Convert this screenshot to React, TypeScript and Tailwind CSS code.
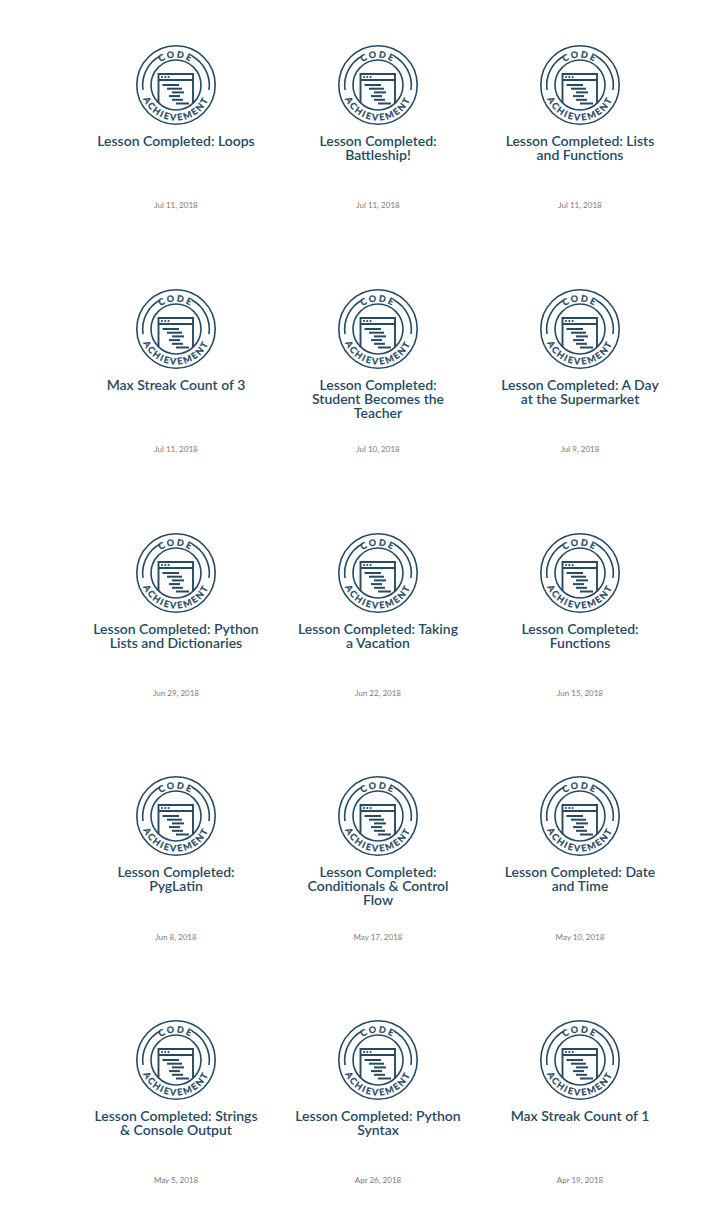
const items = [
  { title: "Lesson Completed: Loops", date: "Jul 11, 2018" },
  { title: "Lesson Completed: Battleship!", date: "Jul 11, 2018" },
  { title: "Lesson Completed: Lists and Functions", date: "Jul 11, 2018" },
  { title: "Max Streak Count of 3", date: "Jul 11, 2018" },
  { title: "Lesson Completed: Student Becomes the Teacher", date: "Jul 10, 2018" },
  { title: "Lesson Completed: A Day at the Supermarket", date: "Jul 9, 2018" },
  { title: "Lesson Completed: Python Lists and Dictionaries", date: "Jun 29, 2018" },
  { title: "Lesson Completed: Taking a Vacation", date: "Jun 22, 2018" },
  { title: "Lesson Completed: Functions", date: "Jun 15, 2018" },
  { title: "Lesson Completed: PygLatin", date: "Jun 8, 2018" },
  { title: "Lesson Completed: Conditionals & Control Flow", date: "May 17, 2018" },
  { title: "Lesson Completed: Date and Time", date: "May 10, 2018" },
  { title: "Lesson Completed: Strings & Console Output", date: "May 5, 2018" },
  { title: "Lesson Completed: Python Syntax", date: "Apr 26, 2018" },
  { title: "Max Streak Count of 1", date: "Apr 19, 2018" },
];

function Badge({ id }: { id: number }) {
  const navy = "#264a63";
  return (
    <svg width="80" height="80" viewBox="0 0 80 80" fill="none" stroke={navy}>
      <defs>
        <path id={`top-${id}`} d="M 12.5 40 A 27.5 27.5 0 0 1 67.5 40" />
        <path id={`bottom-${id}`} d="M 4.5 40 A 35.5 35.5 0 0 0 75.5 40" />
      </defs>
      <circle cx="40" cy="40" r="39.2" strokeWidth="1.6" />
      <circle cx="40" cy="40" r="25" strokeWidth="1.6" />
      <path d="M 7 45 A 33.4 33.4 0 0 1 24 11" strokeWidth="1.6" />
      <path d="M 56 11 A 33.4 33.4 0 0 1 73 45" strokeWidth="1.6" />
      <path d="M22.5 58 V29 H57 V58" strokeWidth="1.9" />
      <path d="M22.5 35 H57" strokeWidth="1.9" />
      <g fill={navy} stroke="none">
        <circle cx="26" cy="32" r="1.1" />
        <circle cx="29.3" cy="32" r="1.1" />
        <circle cx="32.6" cy="32" r="1.1" />
        <rect x="26.5" y="39" width="16.5" height="2" />
        <rect x="31" y="42.7" width="15" height="2" />
        <rect x="36" y="46.4" width="12" height="2" />
        <rect x="33" y="50.1" width="11" height="2" />
        <rect x="36" y="53.8" width="11" height="2" />
        <rect x="40" y="57.5" width="13" height="2" />
      </g>
      <text fill={navy} stroke={navy} strokeWidth="0.25" fontSize="9" fontWeight="700" letterSpacing="2" textAnchor="middle" fontFamily="'Lato', sans-serif">
        <textPath href={`#top-${id}`} startOffset="50%">CODE</textPath>
      </text>
      <text fill={navy} stroke={navy} strokeWidth="0.25" fontSize="9" fontWeight="700" letterSpacing="1.7" textAnchor="middle" fontFamily="'Lato', sans-serif">
        <textPath href={`#bottom-${id}`} startOffset="50%">ACHIEVEMENT</textPath>
      </text>
    </svg>
  );
}

export default function App() {
  return (
    <div className="w-[728px] h-[1229px] bg-white font-['Lato',sans-serif] overflow-hidden">
      <div className="grid grid-cols-[repeat(3,202px)] auto-rows-[243.75px] pl-[75px] pt-[45px]">
        {items.map((item, i) => (
          <div key={i} className="flex flex-col items-center">
            <Badge id={i} />
            <h3 className="mt-[9px] h-[42px] w-[167px] text-center text-[14px] leading-[14px] font-semibold text-[#264a63]">
              {item.title}
            </h3>
            <p className="mt-[23.3px] text-[8px] leading-[12px] text-[#7a7a7a]">{item.date}</p>
          </div>
        ))}
      </div>
    </div>
  );
}
